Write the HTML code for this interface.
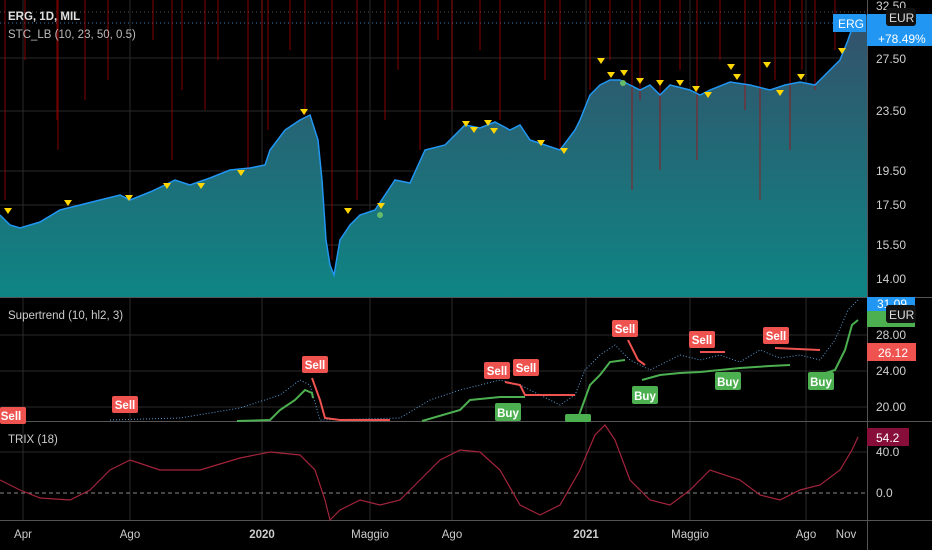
<!DOCTYPE html>
<html><head><meta charset="utf-8"><style>
html,body{margin:0;padding:0;background:#000;width:932px;height:550px;overflow:hidden}
svg text{font-family:"Liberation Sans",sans-serif}
</style></head><body>
<svg width="932" height="550" viewBox="0 0 932 550" xmlns="http://www.w3.org/2000/svg">
<defs>
<linearGradient id="tg" x1="0" y1="0" x2="0" y2="1">
<stop offset="0" stop-color="#34506a"/><stop offset="1" stop-color="#0e8584"/>
</linearGradient>
</defs>
<rect width="932" height="550" fill="#000"/>
<g stroke="#2a2a2a" stroke-width="1">
<line x1="23" y1="0" x2="23" y2="520"/><line x1="130" y1="0" x2="130" y2="520"/>
<line x1="262" y1="0" x2="262" y2="520"/><line x1="370" y1="0" x2="370" y2="520"/>
<line x1="452" y1="0" x2="452" y2="520"/><line x1="586" y1="0" x2="586" y2="520"/>
<line x1="690" y1="0" x2="690" y2="520"/><line x1="806" y1="0" x2="806" y2="520"/>
<line x1="0" y1="58" x2="867" y2="58"/><line x1="0" y1="111" x2="867" y2="111"/>
<line x1="0" y1="171" x2="867" y2="171"/><line x1="0" y1="205" x2="867" y2="205"/>
<line x1="0" y1="245" x2="867" y2="245"/><line x1="0" y1="278" x2="867" y2="278"/>
<line x1="0" y1="335" x2="867" y2="335"/><line x1="0" y1="371" x2="867" y2="371"/>
<line x1="0" y1="407" x2="867" y2="407"/><line x1="0" y1="452" x2="867" y2="452"/>
</g>
<line x1="0" y1="12" x2="867" y2="12" stroke="#555" stroke-dasharray="1,3"/>
<line x1="0" y1="23" x2="867" y2="23" stroke="#2f7fb8" stroke-dasharray="1,3"/>
<polygon fill="url(#tg)" points="0,297 0,215 10,225 20,228 40,222 60,210 80,205 100,200 120,195 130,200 150,192 165,185 175,180 190,185 210,178 230,170 250,168 265,165 270,150 285,130 300,120 310,115 318,140 322,180 326,240 330,265 334,275 340,240 350,225 360,215 375,210 385,195 395,180 410,183 425,150 445,145 465,125 480,128 495,122 510,130 520,125 530,140 545,145 560,150 575,130 580,120 590,95 600,85 610,80 620,80 630,85 640,90 650,85 660,95 670,85 690,90 700,95 710,90 730,82 750,85 770,90 785,85 800,82 815,85 825,75 840,60 848,40 855,20 862,15 867,15 867,297"/>
<g stroke="#b00" stroke-width="1.2" opacity="0.6">
<line x1="5" y1="0" x2="5" y2="200"/><line x1="25" y1="0" x2="25" y2="60"/><line x1="57" y1="0" x2="57" y2="120"/>
<line x1="85" y1="0" x2="85" y2="100"/><line x1="58" y1="0" x2="58" y2="150"/><line x1="108" y1="0" x2="108" y2="80"/>
<line x1="153" y1="0" x2="153" y2="40"/><line x1="172" y1="0" x2="172" y2="160"/><line x1="182" y1="0" x2="182" y2="90"/>
<line x1="205" y1="0" x2="205" y2="110"/><line x1="218" y1="0" x2="218" y2="60"/><line x1="248" y1="0" x2="248" y2="170"/>
<line x1="262" y1="0" x2="262" y2="80"/><line x1="268" y1="0" x2="268" y2="130"/><line x1="290" y1="0" x2="290" y2="50"/>
<line x1="305" y1="0" x2="305" y2="115"/><line x1="332" y1="0" x2="332" y2="260"/><line x1="357" y1="0" x2="357" y2="200"/>
<line x1="385" y1="0" x2="385" y2="120"/><line x1="398" y1="0" x2="398" y2="70"/><line x1="420" y1="0" x2="420" y2="150"/>
<line x1="438" y1="0" x2="438" y2="40"/><line x1="452" y1="0" x2="452" y2="110"/><line x1="480" y1="0" x2="480" y2="50"/>
<line x1="500" y1="0" x2="500" y2="120"/><line x1="545" y1="0" x2="545" y2="80"/><line x1="560" y1="0" x2="560" y2="150"/>
<line x1="590" y1="0" x2="590" y2="90"/><line x1="610" y1="0" x2="610" y2="60"/><line x1="632" y1="0" x2="632" y2="190"/>
<line x1="640" y1="0" x2="640" y2="100"/><line x1="660" y1="0" x2="660" y2="170"/><line x1="680" y1="0" x2="680" y2="70"/>
<line x1="697" y1="0" x2="697" y2="160"/><line x1="720" y1="0" x2="720" y2="60"/><line x1="745" y1="0" x2="745" y2="110"/>
<line x1="760" y1="0" x2="760" y2="200"/><line x1="775" y1="0" x2="775" y2="80"/><line x1="790" y1="0" x2="790" y2="150"/>
<line x1="802" y1="0" x2="802" y2="70"/><line x1="815" y1="0" x2="815" y2="90"/><line x1="835" y1="0" x2="835" y2="50"/>
</g>
<polyline fill="none" stroke="#2196f3" stroke-width="1.5" points="0,215 10,225 20,228 40,222 60,210 80,205 100,200 120,195 130,200 150,192 165,185 175,180 190,185 210,178 230,170 250,168 265,165 270,150 285,130 300,120 310,115 318,140 322,180 326,240 330,265 334,275 340,240 350,225 360,215 375,210 385,195 395,180 410,183 425,150 445,145 465,125 480,128 495,122 510,130 520,125 530,140 545,145 560,150 575,130 580,120 590,95 600,85 610,80 620,80 630,85 640,90 650,85 660,95 670,85 690,90 700,95 710,90 730,82 750,85 770,90 785,85 800,82 815,85 825,75 840,60 848,40 855,20 862,15"/>
<g fill="#ffd600">
<path d="M4,208h8l-4,6z"/><path d="M64,200h8l-4,6z"/><path d="M125,195h8l-4,6z"/><path d="M163,183h8l-4,6z"/><path d="M197,183h8l-4,6z"/><path d="M237,170h8l-4,6z"/><path d="M300,109h8l-4,6z"/><path d="M344,208h8l-4,6z"/><path d="M377,203h8l-4,6z"/><path d="M462,121h8l-4,6z"/><path d="M470,127h8l-4,6z"/><path d="M484,120h8l-4,6z"/><path d="M490,128h8l-4,6z"/><path d="M537,140h8l-4,6z"/><path d="M560,148h8l-4,6z"/><path d="M597,58h8l-4,6z"/><path d="M607,72h8l-4,6z"/><path d="M620,70h8l-4,6z"/><path d="M636,78h8l-4,6z"/><path d="M656,80h8l-4,6z"/><path d="M676,80h8l-4,6z"/><path d="M692,86h8l-4,6z"/><path d="M704,92h8l-4,6z"/><path d="M727,64h8l-4,6z"/><path d="M733,74h8l-4,6z"/><path d="M763,62h8l-4,6z"/><path d="M776,90h8l-4,6z"/><path d="M797,74h8l-4,6z"/><path d="M838,48h8l-4,6z"/>
</g>
<circle cx="380" cy="215" r="3" fill="#66bb6a"/><circle cx="623" cy="83" r="3" fill="#66bb6a"/>
<text x="8" y="20" fill="#e0e0e0" font-size="11.5" font-weight="bold">ERG, 1D, MIL</text>
<text x="8" y="38" fill="#bbb" font-size="11.5">STC_LB (10, 23, 50, 0.5)</text>
<line x1="0" y1="297.5" x2="932" y2="297.5" stroke="#555"/>
<line x1="0" y1="421.5" x2="932" y2="421.5" stroke="#555"/>
<line x1="0" y1="520.5" x2="932" y2="520.5" stroke="#555"/>
<line x1="867.5" y1="0" x2="867.5" y2="550" stroke="#555"/>
<text x="8" y="319" fill="#ccc" font-size="11.5">Supertrend (10, hl2, 3)</text>
<polyline fill="none" stroke="#5b9bd5" stroke-width="1" stroke-dasharray="1,2" points="110,420 180,418 240,408 280,395 300,380 310,385 320,420 400,418 430,400 460,390 480,385 500,380 520,385 540,395 560,405 575,395 585,370 600,355 615,345 630,360 650,370 680,355 700,360 720,355 740,362 760,350 780,358 800,355 820,360 835,340 848,310 858,300"/>
<polyline fill="none" stroke="#4caf50" stroke-width="2" points="237,421 270,420 280,410 295,400 305,390 312,393 313,398"/>
<polyline fill="none" stroke="#4caf50" stroke-width="2" points="422,421 460,410 470,400 490,398 500,397 525,397"/>
<polyline fill="none" stroke="#4caf50" stroke-width="2" points="578,418 590,385 600,375 610,362 625,360"/>
<polyline fill="none" stroke="#4caf50" stroke-width="2" points="642,380 660,375 680,373 700,372 740,368 770,366 790,365"/>
<polyline fill="none" stroke="#4caf50" stroke-width="2" points="820,375 835,370 845,350 852,325 858,320"/>
<polyline fill="none" stroke="#ef5350" stroke-width="2" points="312,378 320,400 325,418 340,420 390,420"/>
<polyline fill="none" stroke="#ef5350" stroke-width="2" points="505,382 520,385 525,395 575,395"/>
<polyline fill="none" stroke="#ef5350" stroke-width="2" points="628,340 638,360 645,365"/>
<polyline fill="none" stroke="#ef5350" stroke-width="2" points="700,352 725,352"/>
<polyline fill="none" stroke="#ef5350" stroke-width="2" points="775,348 820,350"/>
<g font-size="11.5" font-weight="bold" fill="#fff" text-anchor="middle">
<rect x="0" y="407" width="26" height="17" rx="2" fill="#ef5350"/><text x="11" y="420">Sell</text>
<rect x="112" y="396" width="26" height="17" rx="2" fill="#ef5350"/><text x="125" y="409">Sell</text>
<rect x="302" y="356" width="26" height="17" rx="2" fill="#ef5350"/><text x="315" y="369">Sell</text>
<rect x="484" y="362" width="26" height="17" rx="2" fill="#ef5350"/><text x="497" y="375">Sell</text>
<rect x="513" y="359" width="26" height="17" rx="2" fill="#ef5350"/><text x="526" y="372">Sell</text>
<rect x="612" y="320" width="26" height="17" rx="2" fill="#ef5350"/><text x="625" y="333">Sell</text>
<rect x="689" y="331" width="26" height="17" rx="2" fill="#ef5350"/><text x="702" y="344">Sell</text>
<rect x="763" y="327" width="26" height="17" rx="2" fill="#ef5350"/><text x="776" y="340">Sell</text>
<rect x="495" y="403" width="26" height="18" rx="2" fill="#4caf50"/><text x="508" y="417">Buy</text>
<rect x="565" y="414" width="26" height="8" rx="2" fill="#4caf50"/>
<rect x="632" y="386" width="26" height="18" rx="2" fill="#4caf50"/><text x="645" y="400">Buy</text>
<rect x="715" y="372" width="26" height="18" rx="2" fill="#4caf50"/><text x="728" y="386">Buy</text>
<rect x="808" y="372" width="26" height="18" rx="2" fill="#4caf50"/><text x="821" y="386">Buy</text>
</g>
<text x="8" y="443" fill="#ccc" font-size="11.5">TRIX (18)</text>
<line x1="0" y1="493" x2="867" y2="493" stroke="#888" stroke-dasharray="4,3"/>
<polyline fill="none" stroke="#a3243b" stroke-width="1.2" points="0,480 20,490 40,498 70,500 90,490 110,470 130,460 160,470 200,470 240,458 270,452 300,455 315,470 325,500 330,520 340,510 360,500 380,505 400,500 420,480 440,460 460,450 480,452 500,470 520,505 540,515 560,505 580,470 595,435 605,425 615,440 630,480 650,500 670,505 690,490 710,470 740,480 760,495 780,500 800,490 820,485 840,470 852,450 858,437"/>
<g fill="#d0d0d0" font-size="12">
<text x="876" y="10">32.50</text><text x="876" y="63">27.50</text><text x="876" y="115">23.50</text>
<text x="876" y="175">19.50</text><text x="876" y="209">17.50</text><text x="876" y="249">15.50</text><text x="876" y="283">14.00</text>
<text x="876" y="339">28.00</text><text x="876" y="375">24.00</text><text x="876" y="411">20.00</text>
<text x="876" y="456">40.0</text><text x="876" y="497">0.0</text>
</g>
<rect x="833" y="14" width="33" height="18" fill="#2196f3"/><text x="838" y="28" fill="#fff" font-size="12">ERG</text>
<rect x="867" y="14" width="65" height="32" fill="#2196f3"/><text x="878" y="43" fill="#fff" font-size="12">+78.49%</text>
<rect x="886" y="8" width="30" height="18" rx="3" fill="#111"/><text x="889" y="22" fill="#ddd" font-size="12">EUR</text>
<rect x="867" y="297" width="48" height="14" fill="#2196f3"/><text x="877" y="308" fill="#fff" font-size="12">31.09</text>
<rect x="867" y="311" width="48" height="16" fill="#4caf50"/>
<rect x="886" y="305" width="30" height="18" rx="3" fill="#111"/><text x="889" y="319" fill="#ddd" font-size="12">EUR</text>
<rect x="867" y="343" width="49" height="18" fill="#ef5350"/><text x="878" y="357" fill="#fff" font-size="12">26.12</text>
<rect x="867" y="428" width="42" height="18" fill="#880e3a"/><text x="876" y="442" fill="#fff" font-size="12">54.2</text>
<g fill="#ccc" font-size="11.5" text-anchor="middle">
<text x="23" y="538">Apr</text><text x="130" y="538">Ago</text><text x="262" y="538" font-weight="bold">2020</text>
<text x="370" y="538">Maggio</text><text x="452" y="538">Ago</text><text x="586" y="538" font-weight="bold">2021</text>
<text x="690" y="538">Maggio</text><text x="806" y="538">Ago</text><text x="846" y="538">Nov</text>
</g>
</svg>
</body></html>
